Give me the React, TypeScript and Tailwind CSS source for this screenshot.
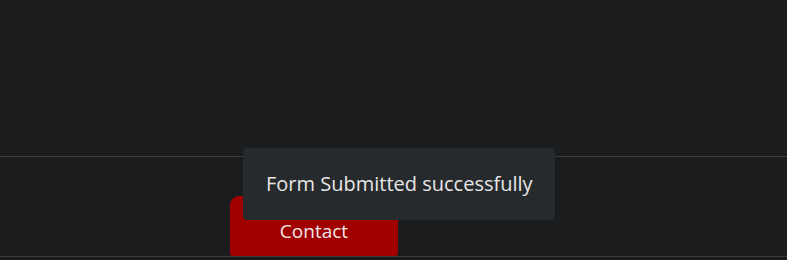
import React from "react";

export default function App() {
  return (
    <div
      className="relative h-[260px] w-[787px] overflow-hidden bg-[#1b1c1e]"
      style={{ fontFamily: '"Open Sans", "Noto Sans", sans-serif' }}
    >
      <div className="h-[157px] border-b border-[#3a3a3a]" />
      <div className="flex h-[100px] items-end border-b border-[#3a3a3a] pl-[230px]">
        <button className="flex h-[60px] w-[168px] items-center justify-center rounded-t-[9px] rounded-b-[3px] bg-[#a00000] pt-[10px] text-[19px] text-[#f0e8e8]">
          Contact
        </button>
      </div>
      <div className="absolute left-[243px] top-[148px] flex h-[72px] w-[312px] items-center rounded-[4px] bg-[#262a2c] pl-[23px] text-[20px] text-[#e6e6e6]">
        Form Submitted successfully
      </div>
    </div>
  );
}
